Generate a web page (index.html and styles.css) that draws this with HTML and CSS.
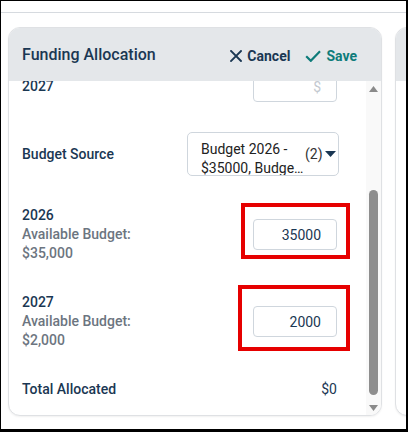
FILE: index.html
```html
<!DOCTYPE html>
<html lang="en">
<head>
<meta charset="utf-8">
<title>Funding Allocation</title>
<link rel="stylesheet" href="styles.css">
</head>
<body>
<div class="frame">
  <div class="topbar"></div>
  <div class="cards">
    <section class="card">
      <header class="card-head">
        <h2 class="card-title">Funding Allocation</h2>
        <div class="actions">
          <button class="btn btn-cancel" type="button">
            <svg class="icon-x" width="12" height="12" viewBox="0 0 12 12" aria-hidden="true"><path d="M1 1L11 11M11 1L1 11" stroke="currentColor" stroke-width="1.9" stroke-linecap="square" fill="none"/></svg>
            Cancel
          </button>
          <button class="btn btn-save" type="button">
            <svg class="icon-check" width="16" height="12" viewBox="0 0 16 12" aria-hidden="true"><path d="M1.2 6.2L5.8 10.8L15 1.2" stroke="currentColor" stroke-width="2.2" fill="none"/></svg>
            Save
          </button>
        </div>
      </header>
      <div class="card-body">
        <div class="scroll" id="scroll">
          <div class="rows">
            <div class="row" id="first-visible">
              <span class="label">2027</span>
              <input class="amount-input" type="text" placeholder="$">
            </div>
            <div class="row">
              <span class="label">Budget Source</span>
              <div class="select">
                <div class="select-text">
                  <span class="select-line">Budget 2026 -</span>
                  <span class="select-line select-line-clip">$35000, Budget 2027 - $2000</span>
                </div>
                <span class="select-count">(2)</span>
                <svg class="caret" width="11" height="6" viewBox="0 0 11 6" aria-hidden="true"><path d="M0 0H11L5.5 6Z" fill="#1a3753"/></svg>
              </div>
            </div>
            <div class="row">
              <div class="label-block">
                <div class="label">2026</div>
                <div class="label sub">Available Budget:</div>
                <div class="label sub">$35,000</div>
              </div>
              <input class="amount-input" type="text" value="35000">
            </div>
            <div class="row">
              <div class="label-block">
                <div class="label">2027</div>
                <div class="label sub">Available Budget:</div>
                <div class="label sub">$2,000</div>
              </div>
              <input class="amount-input" type="text" value="2000">
            </div>
            <div class="row">
              <span class="label">Total Allocated</span>
              <span class="total-value">$0</span>
            </div>
          </div>
        </div>
        <div class="scrollbar" aria-hidden="true">
          <div class="sb-btn"><svg width="9" height="6" viewBox="0 0 9 6"><path d="M4.5 0L9 6H0Z" fill="#8a8a8a"/></svg></div>
          <div class="sb-track"><div class="sb-thumb" style="margin-top:94px;height:205px"></div></div>
          <div class="sb-btn"><svg width="9" height="6" viewBox="0 0 9 6"><path d="M0 0H9L4.5 6Z" fill="#8a8a8a"/></svg></div>
        </div>
      </div>
    </section>
    <section class="card card-next">
      <header class="card-head"></header>
    </section>
  </div>
  <div class="callout callout-1"></div>
  <div class="callout callout-2"></div>
</div>
<script src="app.js"></script>
</body>
</html>
```

FILE: styles.css
```css
html, body {
  margin: 0;
  padding: 0;
  background: #fff;
}

body {
  font-family: Roboto, "Liberation Sans", Arial, sans-serif;
}

.frame {
  position: relative;
  width: 408px;
  height: 432px;
  box-sizing: border-box;
  border-style: solid;
  border-color: #000;
  border-width: 1px 2px 3px 1px;
  overflow: hidden;
  background: #fff;
}

.topbar {
  height: 11px;
  border-bottom: 1px solid #d6dadf;
}

.cards {
  display: flex;
  gap: 13px;
  padding: 14px 0 0 7px;
}

.card {
  flex: 0 0 374px;
  height: 389px;
  box-sizing: border-box;
  border: 1px solid #dfe1e4;
  border-radius: 12px;
  overflow: hidden;
  display: flex;
  flex-direction: column;
  background: #fff;
  box-shadow: 0 1px 2px rgba(0, 0, 0, 0.06);
}

.card-head {
  flex: none;
  height: 53px;
  background: #e4e7ea;
  display: flex;
  align-items: center;
  padding: 0 24px 0 13px;
}

.card-title {
  flex: 1;
  margin: 0;
  font-size: 16px;
  font-weight: 500;
  color: #1a3753;
}

.actions {
  display: flex;
  align-items: center;
  gap: 15px;
  padding-top: 3px;
}

.btn {
  display: flex;
  align-items: center;
  gap: 5px;
  border: 0;
  background: none;
  padding: 0;
  font-family: Roboto, "Liberation Sans", Arial, sans-serif;
  font-size: 14px;
  font-weight: 700;
  color: #1a3753;
  cursor: pointer;
}

.btn-save {
  color: #0e7c7a;
}

.card-body {
  flex: 1;
  display: flex;
  min-height: 0;
}

.scroll {
  flex: 1;
  position: relative;
  overflow: hidden;
}

.rows {
  display: flex;
  flex-direction: column;
  gap: 30px;
  padding: 0 29px 17px 13px;
}

.row {
  display: flex;
  align-items: center;
  justify-content: space-between;
}

.label {
  font-size: 14px;
  font-weight: 500;
  line-height: 19px;
  color: #1a3753;
}

.sub {
  color: #6c7580;
}

.amount-input {
  width: 84px;
  height: 31px;
  box-sizing: border-box;
  border: 1px solid #cfd6dd;
  border-radius: 4px;
  padding: 0 15px;
  margin: 0;
  text-align: right;
  font-family: Roboto, "Liberation Sans", Arial, sans-serif;
  font-size: 14px;
  color: #1a3753;
  background: #fff;
  outline: none;
}

.amount-input::placeholder {
  color: #c3c9d0;
}

.select {
  width: 152px;
  height: 44px;
  box-sizing: border-box;
  margin-right: -2px;
  border: 1px solid #cfd6dd;
  border-radius: 5px;
  display: flex;
  align-items: center;
  padding: 0 3px 0 13px;
  overflow: hidden;
  font-size: 14px;
  color: #222;
}

.select-text {
  flex: 0 0 101px;
  align-self: flex-start;
  padding-top: 7px;
  line-height: 19px;
}

.select-line {
  display: block;
  white-space: nowrap;
}

.select-line-clip {
  width: 104px;
  overflow: hidden;
  text-overflow: ellipsis;
}

.select-count {
  flex: none;
  line-height: 19px;
  color: #333;
}

.caret {
  flex: none;
  margin-left: 2px;
}

.total-value {
  font-size: 14px;
  line-height: 19px;
  color: #1a3753;
}

.scrollbar {
  flex: 0 0 15px;
  background: #f9f9f9;
  display: flex;
  flex-direction: column;
  align-items: center;
}

.sb-btn {
  flex: none;
  height: 15px;
  display: flex;
  align-items: center;
  justify-content: center;
}

.sb-track {
  flex: 1;
  width: 9px;
}

.sb-thumb {
  width: 9px;
  background: #8e8e8e;
  border-radius: 5px;
}

.callout {
  position: absolute;
  box-sizing: border-box;
  border: 4px solid #e60000;
}

.callout-1 {
  left: 240px;
  top: 202px;
  width: 109px;
  height: 56px;
}

.callout-2 {
  left: 237px;
  top: 284px;
  width: 112px;
  height: 66px;
}
```

FILE: app.js
```js
(function () {
  var scroll = document.getElementById('scroll');
  var first = document.getElementById('first-visible');
  if (scroll && first) {
    scroll.scrollTop = first.offsetTop + 10;
  }
})();
```
